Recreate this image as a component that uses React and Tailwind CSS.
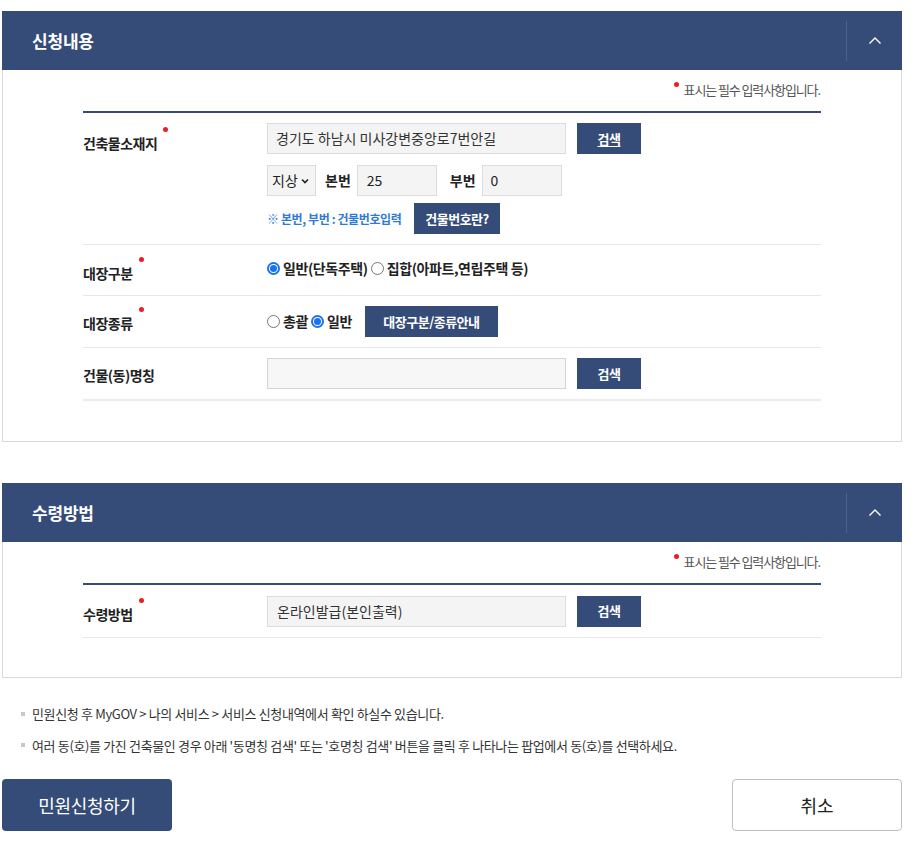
import React from 'react'

const font = { fontFamily: '"Noto Sans CJK KR", "Noto Sans", sans-serif' }

function Dot() {
  return <span className="absolute -top-[6px] -right-[11px] w-[5px] h-[5px] rounded-full bg-[#ee1c24]" />
}

function Radio({ checked }) {
  return checked ? (
    <span className="inline-flex w-[13px] h-[13px] rounded-full bg-[#1a73e8] items-center justify-center">
      <span className="w-[9px] h-[9px] rounded-full bg-white flex items-center justify-center">
        <span className="w-[7px] h-[7px] rounded-full bg-[#1a73e8]" />
      </span>
    </span>
  ) : (
    <span className="inline-block w-[13px] h-[13px] rounded-full border border-[#767676] bg-white" />
  )
}

function PanelHeader({ title }) {
  return (
    <div className="h-[59px] bg-[#354c79] flex items-center justify-between">
      <h2 className="pl-[30px] text-[17px] font-bold text-white tracking-[-0.2px]">{title}</h2>
      <div className="h-[40px] w-[56px] border-l border-[#4d6290] flex items-center justify-center">
        <svg width="14" height="9" viewBox="0 0 14 9" fill="none">
          <path d="M1.5 7.5 L7 2 L12.5 7.5" stroke="white" strokeWidth="1.4" />
        </svg>
      </div>
    </div>
  )
}

function Required() {
  return (
    <div className="flex justify-end items-start pt-[11px] pr-[1px] h-[41px]">
      <span className="w-[5px] h-[5px] rounded-full bg-[#ee1c24] mt-[1px] mr-[5px]" />
      <span className="text-[13px] text-[#555] tracking-[-1.1px] leading-[17px]">표시는 필수 입력사항입니다.</span>
    </div>
  )
}

function Label({ children, req }) {
  return (
    <div className="w-[184px] shrink-0">
      <span className="relative text-[14px] font-bold text-[#222] tracking-[-0.5px]">
        {children}
        {req && <Dot />}
      </span>
    </div>
  )
}

function NavyBtn({ children, className = '' }) {
  return (
    <button className={`h-[31px] bg-[#354c79] text-white text-[13px] font-bold tracking-[-0.5px] ${className}`}>{children}</button>
  )
}

export default function App() {
  return (
    <div className="bg-white min-h-[846px] pt-[11px]" style={font}>
      <div className="ml-[2px] w-[900px]">
        <section>
          <PanelHeader title="신청내용" />
          <div className="border border-t-0 border-[#d9d9d9] h-[372px]">
            <div className="ml-[80px] w-[738px]">
              <Required />
              <div className="border-t-2 border-[#354c79]">
                <div className="flex pt-[10px] pb-[10px] border-b border-[#e8e8e8]">
                  <div className="w-[184px] shrink-0 pt-[7px]">
                    <span className="relative text-[14px] font-bold text-[#222] tracking-[-0.5px]">건축물소재지<Dot /></span>
                  </div>
                  <div className="flex flex-col">
                    <div className="flex gap-[11px]">
                      <div className="w-[299px] h-[31px] bg-[#f4f4f4] border border-[#dcdcdc] flex items-center px-[8px] text-[14px] text-[#333]">경기도 하남시 미사강변중앙로7번안길</div>
                      <NavyBtn className="w-[64px] underline underline-offset-2">검색</NavyBtn>
                    </div>
                    <div className="flex items-center mt-[11px]">
                      <div className="w-[49px] h-[31px] bg-[#f4f4f4] border border-[#dcdcdc] flex items-center pl-[4px] gap-[3px] text-[14px] text-[#222]">
                        지상
                        <svg width="8" height="6" viewBox="0 0 8 6"><path d="M1 1.5 L4 4.5 L7 1.5" stroke="#222" strokeWidth="1.6" fill="none" /></svg>
                      </div>
                      <span className="ml-[9px] text-[14px] font-bold text-[#222]">본번</span>
                      <div className="ml-[6px] w-[80px] h-[31px] bg-[#f4f4f4] border border-[#dcdcdc] flex items-center px-[9px] text-[14px] text-[#222]">25</div>
                      <span className="ml-[13px] text-[14px] font-bold text-[#222]">부번</span>
                      <div className="ml-[6px] w-[80px] h-[31px] bg-[#f4f4f4] border border-[#dcdcdc] flex items-center px-[8px] text-[14px] text-[#222]">0</div>
                    </div>
                    <div className="flex items-center mt-[7px]">
                      <span className="text-[12px] font-bold text-[#2f7ad6] tracking-[-0.4px] w-[147px]">※ 본번, 부번 : 건물번호입력</span>
                      <NavyBtn className="w-[86px] h-[29px] text-[12px]">건물번호란?</NavyBtn>
                    </div>
                  </div>
                </div>
                <div className="flex items-center h-[51px] border-b border-[#e8e8e8]">
                  <div className="pt-[4px]"><Label req>대장구분</Label></div>
                  <div className="flex items-center gap-[3px] text-[14px] font-bold text-[#222] tracking-[-0.4px] pb-[4px]">
                    <Radio checked /><span>일반(단독주택)</span><Radio /><span>집합(아파트,연립주택 등)</span>
                  </div>
                </div>
                <div className="flex items-center h-[52px] border-b border-[#e8e8e8]">
                  <div className="pt-[1px]"><Label req>대장종류</Label></div>
                  <div className="flex items-center gap-[3px] text-[14px] font-bold text-[#222] tracking-[-0.4px]">
                    <Radio /><span>총괄</span><Radio checked /><span>일반</span>
                    <NavyBtn className="ml-[10px] w-[133px] h-[29px] text-[12px]">대장구분/종류안내</NavyBtn>
                  </div>
                </div>
                <div className="flex items-center h-[53px] border-b-2 border-[#ececec]">
                  <Label>건물(동)명칭</Label>
                  <div className="flex gap-[11px]">
                    <div className="w-[299px] h-[31px] bg-[#f7f7f7] border border-[#d4d4d4]" />
                    <NavyBtn className="w-[64px]">검색</NavyBtn>
                  </div>
                </div>
              </div>
            </div>
          </div>
        </section>

        <section className="mt-[41px]">
          <PanelHeader title="수령방법" />
          <div className="border border-t-0 border-[#d9d9d9] h-[136px]">
            <div className="ml-[80px] w-[738px]">
              <Required />
              <div className="border-t-2 border-[#354c79]">
                <div className="flex items-center h-[53px] border-b border-[#e8e8e8]">
                  <div className="pt-[3px]"><Label req>수령방법</Label></div>
                  <div className="flex gap-[11px]">
                    <div className="w-[299px] h-[31px] bg-[#f4f4f4] border border-[#dcdcdc] flex items-center px-[9px] text-[14px] text-[#333]">온라인발급(본인출력)</div>
                    <NavyBtn className="w-[64px]">검색</NavyBtn>
                  </div>
                </div>
              </div>
            </div>
          </div>
        </section>

        <ul className="mt-[26px] ml-[19px] flex flex-col gap-[12px] text-[13px] text-[#333] tracking-[-0.35px]">
          <li className="flex items-center gap-[7px]"><span className="w-[4px] h-[4px] bg-[#c8c8c8]" />민원신청 후 MyGOV &gt; 나의 서비스 &gt; 서비스 신청내역에서 확인 하실수 있습니다.</li>
          <li className="flex items-center gap-[7px]"><span className="w-[4px] h-[4px] bg-[#c8c8c8]" />여러 동(호)를 가진 건축물인 경우 아래 '동명칭 검색' 또는 '호명칭 검색' 버튼을 클릭 후 나타나는 팝업에서 동(호)를 선택하세요.</li>
        </ul>

        <div className="mt-[24px] flex justify-between">
          <button className="w-[170px] h-[52px] rounded-[4px] bg-[#354c79] text-white text-[18px] tracking-[-0.3px]">민원신청하기</button>
          <button className="w-[170px] h-[52px] rounded-[4px] bg-white border border-[#bfbfbf] text-[#222] text-[18px]">취소</button>
        </div>
      </div>
    </div>
  )
}
